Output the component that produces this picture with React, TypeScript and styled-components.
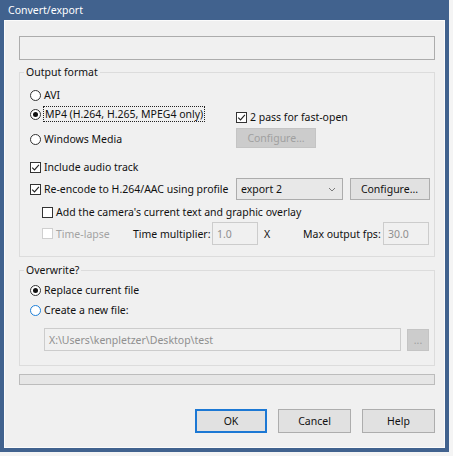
import React from "react";
import styled, { createGlobalStyle, css } from "styled-components";

const GlobalStyle = createGlobalStyle`
  html, body { margin: 0; padding: 0; background: #f4f4f4; }
  body { font-family: "Noto Sans", "Segoe UI", sans-serif; font-size: 10.5px; color: #111; }
  * { box-sizing: border-box; }
`;

const Window = styled.div`
  width: 449px;
  height: 452px;
  display: flex;
  flex-direction: column;
  background: #41628e;
  padding: 0 4px 4px 4px;
`;

const TitleBar = styled.div`
  height: 20px;
  flex: none;
  display: flex;
  align-items: center;
  padding-left: 4px;
  color: #fff;
  font-size: 10.5px;
`;

const Client = styled.div`
  flex: 1;
  display: flex;
  flex-direction: column;
  background: #f0f0f0;
  border: 1px solid #fbfbfb;
  padding: 15px 9px 0 14px;
`;

const NameField = styled.div`
  height: 24px;
  border: 1px solid #acacac;
  background: #f0f0f0;
`;

const Group = styled.fieldset<{ $mt: number }>`
  margin: ${(p) => p.$mt}px 0 0 0;
  padding: 0;
  border: 1px solid #dcdcdc;
  min-width: 0;
`;

const Legend = styled.legend`
  margin-left: 4px;
  padding: 0 2px;
  line-height: 16px;
  font-size: 10.5px;
  color: #111;
`;

const GroupBody = styled.div<{ $pt: number; $pb: number }>`
  display: flex;
  flex-direction: column;
  padding: ${(p) => p.$pt}px 4px ${(p) => p.$pb}px 10px;
`;

const TopGrid = styled.div`
  display: grid;
  grid-template-columns: 206px 1fr;
`;

const Column = styled.div<{ $pt?: number }>`
  display: flex;
  flex-direction: column;
  align-items: flex-start;
  padding-top: ${(p) => p.$pt ?? 0}px;
`;

const OptionRow = styled.label<{ $mt?: number; $indent?: number; $h?: number; $disabled?: boolean }>`
  display: flex;
  align-items: center;
  gap: 3px;
  height: ${(p) => p.$h ?? 18}px;
  margin-top: ${(p) => p.$mt ?? 0}px;
  padding-left: ${(p) => p.$indent ?? 0}px;
  white-space: nowrap;
  color: ${(p) => (p.$disabled ? "#a3a3a3" : "#111")};
`;

const FocusText = styled.span`
  outline: 1px dotted #222;
  outline-offset: 0;
  padding: 0 1px;
  line-height: 14px;
`;

const RadioCircle = styled.span<{ $checked?: boolean; $hover?: boolean }>`
  width: 11px;
  height: 11px;
  flex: none;
  border-radius: 50%;
  border: 1px solid ${(p) => (p.$hover ? "#1e7fd8" : "#333")};
  background: #fff;
  display: flex;
  align-items: center;
  justify-content: center;
  ${(p) =>
    p.$checked &&
    css`
      &::after {
        content: "";
        width: 5px;
        height: 5px;
        border-radius: 50%;
        background: #111;
      }
    `}
`;

const CheckSquare = styled.span<{ $disabled?: boolean }>`
  width: 11px;
  height: 11px;
  flex: none;
  border: 1px solid ${(p) => (p.$disabled ? "#cfcfcf" : "#333")};
  background: #fff;
  display: flex;
  align-items: center;
  justify-content: center;
`;

const Check = ({ checked, disabled }: { checked?: boolean; disabled?: boolean }) => (
  <CheckSquare $disabled={disabled}>
    {checked && (
      <svg width="9" height="9" viewBox="0 0 9 9">
        <path d="M1.2 4.6 L3.5 6.9 L7.9 1.8" fill="none" stroke="#222" strokeWidth="1.1" />
      </svg>
    )}
  </CheckSquare>
);

const WinButton = styled.button<{ $w: number; $h?: number; $disabled?: boolean; $default?: boolean }>`
  width: ${(p) => p.$w}px;
  height: ${(p) => p.$h ?? 24}px;
  flex: none;
  font-family: inherit;
  font-size: 10.5px;
  padding: 0;
  background: ${(p) => (p.$disabled ? "#cccccc" : "#e1e1e1")};
  color: ${(p) => (p.$disabled ? "#a0a0a0" : "#111")};
  border: 1px solid ${(p) => (p.$default ? "#1c78d4" : p.$disabled ? "#c4c4c4" : "#adadad")};
  box-shadow: ${(p) => (p.$default ? "inset 0 0 0 1px #1c78d4" : "none")};
`;

const ProfileRow = styled.div`
  display: grid;
  grid-template-columns: 206px auto auto;
  align-items: center;
  height: 22px;
  margin-top: 2px;
`;

const Select = styled.div`
  width: 107px;
  height: 22px;
  border: 1px solid #acacac;
  background: #e8e8e8;
  display: flex;
  align-items: center;
  justify-content: space-between;
  padding: 0 6px 0 4px;
  margin-right: 6px;
`;

const TimeRow = styled.div`
  display: grid;
  grid-template-columns: 91px 79px 46px 45px 80px 46px;
  align-items: center;
  height: 22px;
  margin-top: 1px;
  padding-left: 12px;
  white-space: nowrap;
`;

const FieldText = styled.span<{ $pl?: number }>`
  padding-left: ${(p) => p.$pl ?? 0}px;
`;

const DisabledInput = styled.div<{ $w?: number }>`
  width: ${(p) => (p.$w ? `${p.$w}px` : "auto")};
  height: 23px;
  border: 1px solid #cccccc;
  background: #f0f0f0;
  color: #8f8f8f;
  display: flex;
  align-items: center;
  padding-left: 4px;
`;

const PathRow = styled.div`
  display: flex;
  align-items: center;
  gap: 6px;
  margin-top: 9px;
  padding-left: 14px;
`;

const Progress = styled.div`
  height: 11px;
  margin-top: 8px;
  border: 1px solid #bcbcbc;
  background: #e6e6e6;
`;

const ButtonRow = styled.div`
  display: flex;
  justify-content: flex-end;
  gap: 11px;
  margin-top: 24px;
`;

export default function App() {
  return (
    <>
      <GlobalStyle />
      <Window>
        <TitleBar>Convert/export</TitleBar>
        <Client>
          <NameField />
          <Group $mt={4}>
            <Legend>Output format</Legend>
            <GroupBody $pt={6} $pb={12}>
              <TopGrid>
                <Column>
                  <OptionRow>
                    <RadioCircle />
                    AVI
                  </OptionRow>
                  <OptionRow $mt={1}>
                    <RadioCircle $checked />
                    <FocusText>MP4 (H.264, H.265, MPEG4 only)</FocusText>
                  </OptionRow>
                  <OptionRow $mt={7}>
                    <RadioCircle />
                    Windows Media
                  </OptionRow>
                </Column>
                <Column $pt={22}>
                  <OptionRow>
                    <Check checked />2 pass for fast-open
                  </OptionRow>
                  <WinButton $w={80} $h={20} $disabled style={{ marginTop: 2 }}>
                    Configure...
                  </WinButton>
                </Column>
              </TopGrid>
              <OptionRow $mt={10}>
                <Check checked />
                Include audio track
              </OptionRow>
              <ProfileRow>
                <OptionRow>
                  <Check checked />
                  Re-encode to H.264/AAC using profile
                </OptionRow>
                <Select>
                  <span>export 2</span>
                  <svg width="8" height="5" viewBox="0 0 8 5">
                    <path d="M1 1 L4 4 L7 1" fill="none" stroke="#7a7a7a" strokeWidth="1" />
                  </svg>
                </Select>
                <WinButton $w={80} $h={22}>
                  Configure...
                </WinButton>
              </ProfileRow>
              <OptionRow $mt={3} $indent={12}>
                <Check />
                Add the camera's current text and graphic overlay
              </OptionRow>
              <TimeRow>
                <OptionRow $disabled>
                  <Check disabled />
                  Time-lapse
                </OptionRow>
                <FieldText>Time multiplier:</FieldText>
                <DisabledInput>1.0</DisabledInput>
                <FieldText $pl={6}>X</FieldText>
                <FieldText>Max output fps:</FieldText>
                <DisabledInput>30.0</DisabledInput>
              </TimeRow>
            </GroupBody>
          </Group>
          <Group $mt={5}>
            <Legend>Overwrite?</Legend>
            <GroupBody $pt={3} $pb={14}>
              <OptionRow>
                <RadioCircle $checked />
                Replace current file
              </OptionRow>
              <OptionRow $mt={2}>
                <RadioCircle $hover />
                Create a new file:
              </OptionRow>
              <PathRow>
                <DisabledInput $w={357}>X:\Users\kenpletzer\Desktop\test</DisabledInput>
                <WinButton $w={22} $h={22} $disabled>
                  ...
                </WinButton>
              </PathRow>
            </GroupBody>
          </Group>
          <Progress />
          <ButtonRow>
            <WinButton $w={72} $default>
              OK
            </WinButton>
            <WinButton $w={73}>Cancel</WinButton>
            <WinButton $w={73}>Help</WinButton>
          </ButtonRow>
        </Client>
      </Window>
    </>
  );
}
